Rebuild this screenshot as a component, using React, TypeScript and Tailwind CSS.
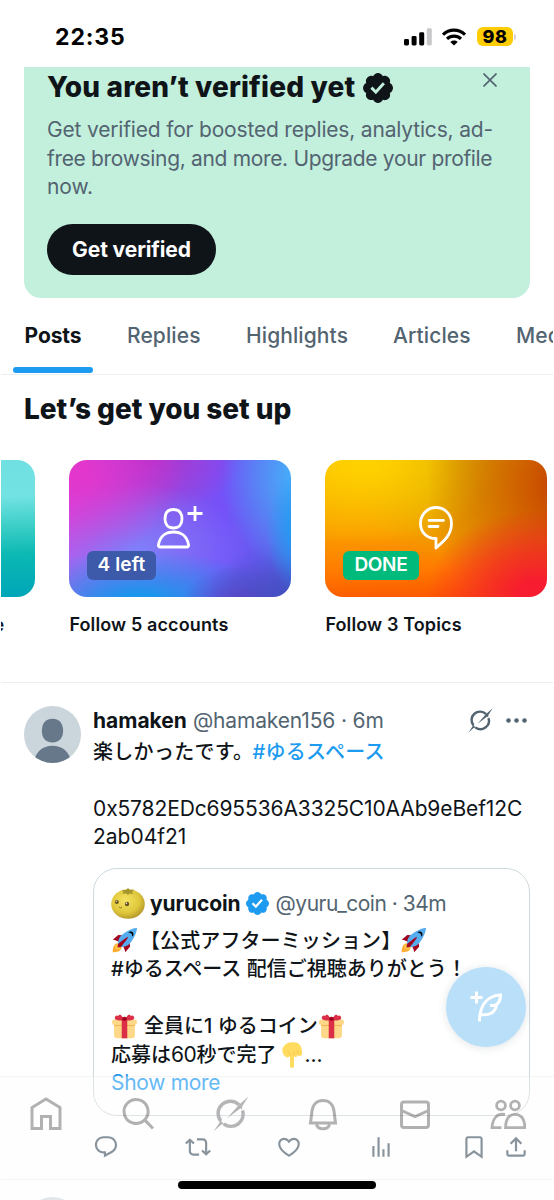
import React from "react";

type IconProps = { d: string; className?: string; viewBox?: string };

const Icon = ({ d, className = "", viewBox = "0 0 24 24" }: IconProps) => (
  <svg viewBox={viewBox} className={`shrink-0 ${className}`} fill="currentColor" aria-hidden="true">
    <path d={d} />
  </svg>
);

const PATHS = {
  verified:
    "M20.396 11c-.018-.646-.215-1.275-.57-1.816-.354-.54-.852-.972-1.438-1.246.223-.607.27-1.264.14-1.897-.131-.634-.437-1.218-.882-1.687-.47-.445-1.053-.75-1.687-.882-.633-.13-1.29-.083-1.897.14-.273-.587-.704-1.086-1.245-1.44S11.647 1.62 11 1.604c-.646.017-1.273.213-1.813.568s-.969.854-1.24 1.44c-.608-.223-1.267-.272-1.902-.14-.635.13-1.22.436-1.69.882-.445.47-.749 1.055-.878 1.688-.13.633-.08 1.29.144 1.896-.587.274-1.087.705-1.443 1.245-.356.54-.555 1.17-.574 1.817.02.647.218 1.276.574 1.817.356.54.856.972 1.443 1.245-.224.606-.274 1.263-.144 1.896.13.634.433 1.218.877 1.688.47.443 1.054.747 1.687.878.633.132 1.29.084 1.897-.136.274.586.705 1.084 1.246 1.439.54.354 1.17.551 1.816.569.647-.016 1.276-.213 1.817-.567s.972-.854 1.245-1.44c.604.239 1.266.296 1.903.164.636-.132 1.22-.447 1.68-.907.46-.46.776-1.044.908-1.681s.075-1.299-.165-1.903c.586-.274 1.084-.705 1.439-1.246.354-.54.551-1.17.569-1.816zM9.662 14.85l-3.429-3.428 1.293-1.302 2.072 2.072 4.4-4.794 1.347 1.246z",
  reply:
    "M1.751 10c0-4.42 3.584-8 8.005-8h4.366c4.49 0 8.129 3.64 8.129 8.13 0 2.96-1.607 5.68-4.196 7.11l-8.054 4.46v-3.69h-.067c-4.49.1-8.183-3.51-8.183-8.01zm8.005-6c-3.317 0-6.005 2.69-6.005 6 0 3.37 2.77 6.08 6.138 6.01l.351-.01h1.761v2.3l5.087-2.81c1.951-1.08 3.163-3.13 3.163-5.36 0-3.39-2.744-6.13-6.129-6.13H9.756z",
  repost:
    "M4.5 3.88l4.432 4.14-1.364 1.46L5.5 7.55V16c0 1.1.896 2 2 2H13v2H7.5c-2.209 0-4-1.79-4-4V7.55L1.432 9.48.068 8.02 4.5 3.88zM16.5 6H11V4h5.5c2.209 0 4 1.79 4 4v8.45l2.068-1.93 1.364 1.46-4.432 4.14-4.432-4.14 1.364-1.46 2.068 1.93V8c0-1.1-.896-2-2-2z",
  like: "M16.697 5.5c-1.222-.06-2.679.51-3.89 2.16l-.805 1.09-.806-1.09C9.984 6.01 8.526 5.44 7.304 5.5c-1.243.07-2.349.78-2.91 1.91-.552 1.12-.633 2.78.479 4.82 1.074 1.97 3.257 4.27 7.129 6.61 3.87-2.34 6.052-4.64 7.126-6.61 1.111-2.04 1.03-3.7.477-4.82-.561-1.13-1.666-1.84-2.908-1.91zm4.187 7.69c-1.351 2.48-4.001 5.12-8.379 7.67l-.503.3-.504-.3c-4.379-2.55-7.029-5.19-8.382-7.67-1.36-2.5-1.41-4.86-.514-6.67.887-1.79 2.647-2.91 4.601-3.01 1.651-.09 3.368.56 4.798 2.01 1.429-1.45 3.146-2.1 4.796-2.01 1.954.1 3.714 1.22 4.601 3.01.896 1.81.846 4.17-.514 6.67z",
  views: "M8.75 21V3h2v18h-2zM18 21V8.5h2V21h-2zM4 21l.004-10h2L6 21H4zm9.248 0v-7h2v7h-2z",
  bookmark:
    "M4 4.5C4 3.12 5.119 2 6.5 2h11C18.881 2 20 3.12 20 4.5v18.44l-8-5.71-8 5.71V4.5zM6.5 4c-.276 0-.5.22-.5.5v14.56l6-4.29 6 4.29V4.5c0-.28-.224-.5-.5-.5h-11z",
  share:
    "M12 2.59l5.7 5.7-1.41 1.42L13 6.41V16h-2V6.41l-3.3 3.3-1.41-1.42L12 2.59zM21 15l-.02 3.51c0 1.38-1.12 2.49-2.5 2.49H5.5C4.11 21 3 19.88 3 18.5V15h2v3.5c0 .28.22.5.5.5h12.98c.28 0 .5-.22.5-.5L19 15h2z",
};

const Grok = ({ className = "" }: { className?: string }) => (
  <svg viewBox="0 0 36 36" className={`shrink-0 ${className}`} fill="none" aria-hidden="true">
    <path d="M26 8.800A12.200 12.200 0 0 0 7.800 25" stroke="currentColor" strokeWidth="3.500" />
    <path d="M10.800 28A12.200 12.200 0 0 0 29.600 14.500" stroke="currentColor" strokeWidth="3.500" />
    <path d="M13.800 22.600L26 8.800L35.500 .5L30 9C28.900 10.900 28.800 12 29.400 14L27.600 12.200Z" fill="currentColor" />
    <path d="M.5 35.500L6 27.500C7.100 25.800 7.100 24.600 6.500 22.800L9.200 26.200L12.500 28.900C9.800 28 8.700 28.300 7.500 29.300Z" fill="currentColor" />
  </svg>
);

const Rocket = ({ className = "" }: { className?: string }) => (
  <svg viewBox="0 0 36 36" className={`shrink-0 ${className}`} aria-hidden="true">
    <path fill="#A0041E" d="M1 17l8-7 16 1 1 16-7 8s.001-5.999-6-12-12-6-12-6z" />
    <path fill="#FFAC33" d="M.973 35s-.036-7.979 2.985-11S15 21.187 15 21.187 14.999 29 11.999 32c-3 3-11.026 3-11.026 3z" />
    <circle fill="#FFCC4D" cx="9" cy="27" r="4" />
    <path fill="#55ACEE" d="M35.999 0s-10 0-22 10c-6 5-6 14-4 16s11 2 16-4c10-12 10-22 10-22z" />
    <path d="M26.999 5c-1.623 0-3.013.971-3.641 2.36.502-.227 1.055-.36 1.641-.36 2.209 0 4 1.791 4 4 0 .586-.133 1.139-.359 1.64 1.389-.627 2.359-2.017 2.359-3.64 0-2.209-1.791-4-4-4z" />
    <path fill="#A0041E" d="M8 28s0-4 1-5 13.001-10.999 14-10-9.001 13-10.001 14S8 28 8 28z" />
  </svg>
);

const Gift = ({ className = "" }: { className?: string }) => (
  <svg viewBox="0 0 36 36" className={`shrink-0 ${className}`} aria-hidden="true">
    <path fill="#FDD888" d="M33 31c0 2.200-1.800 4-4 4H7c-2.200 0-4-1.800-4-4V14h30z" />
    <path fill="#FCAB40" d="M3 15h30v2H3z" />
    <rect fill="#FDD888" y="8" width="36" height="8" rx="3.500" />
    <path fill="#DA2F47" d="M14 8h8v27h-8z" />
    <path fill="#DA2F47" d="M18 9C13 10 4 9 4 6c0-4 3-5 5-3 1-3 4-2 5 0s3 3 4 4c1-1 3-2 4-4s4-3 5 0c2-2 5-1 5 3 0 3-9 4-14 3z" />
    <ellipse fill="#A0041E" cx="18" cy="7" rx="3.500" ry="3" />
  </svg>
);

const PointDown = ({ className = "" }: { className?: string }) => (
  <svg viewBox="0 0 36 36" className={`shrink-0 ${className}`} aria-hidden="true">
    <path
      fill="#FFDC5D"
      d="M10 2.500C13-.5 24-.5 27 2c3.500 2.500 5 8 5 14 0 4-5 4.500-6 1.500-.3 4-4.600 4-5.200 1.500V33c0 4-5.600 4-5.600 0V19c-1 2.500-5 3-6.500 1C6 18 4.500 14 4.500 11c0-3 2.500-5.500 5.500-8.500z"
    />
    <path fill="none" stroke="#EF9645" strokeOpacity=".55" strokeWidth="1" strokeLinecap="round" d="M26 12v4.500M20.800 13v5M15 18.500c0-3-1-4-2.500-5" />
  </svg>
);

const StatusBar = () => (
  <header className="flex h-[67px] shrink-0 items-center justify-between pt-[6px] pr-[37px] pl-[54px]">
    <span className="text-[23px] font-bold leading-7 tracking-[0.9px] text-black">22:35</span>
    <div className="flex items-center">
      <svg viewBox="0 0 28 18" className="h-[18px] w-[28px]" aria-hidden="true">
        <rect x="0" y="11" width="5" height="6.500" rx="1.400" />
        <rect x="7.600" y="8" width="5" height="9.500" rx="1.400" />
        <rect x="15.200" y="4.300" width="5" height="13.200" rx="1.400" />
        <rect x="22.800" y="0.300" width="5" height="17.200" rx="1.400" fill="#c8c8cb" />
      </svg>
      <svg viewBox="0 0 24 18" className="ml-[10px] h-[18px] w-[24px]" fill="none" stroke="#000" strokeWidth="3.100" aria-hidden="true">
        <path d="M1 6.700C7 .6 17 .6 23 6.700" />
        <path d="M5 10.900C9 7.200 15 7.200 19 10.900" />
        <path d="M12 17.600L8.300 13.900C10.500 12 13.500 12 15.700 13.900Z" fill="#000" stroke="none" />
      </svg>
      <span className="ml-[11px] flex h-[19px] w-[36px] items-center justify-center rounded-[6px] bg-[#fdcc02] text-[18px] font-extrabold tracking-[0.6px] text-black">98</span>
      <span className="ml-px h-[6px] w-[2px] rounded-r-full bg-[#dccfe0]" />
    </div>
  </header>
);

const VerifyBanner = () => (
  <section className="mx-[23px] h-[231px] shrink-0 rounded-b-[17px] bg-[#c3efdd] px-[23px] pt-[4px]">
    <div className="flex h-[33px] items-center">
      <h2 className="text-[28px] font-extrabold leading-[33px] tracking-[0.16px] whitespace-nowrap">You aren’t verified yet</h2>
      <Icon d={PATHS.verified} viewBox="1.600 1.600 18.800 18.800" className="ml-[8px] h-[30px] w-[30px]" />
      <svg viewBox="0 0 14 14" className="mr-[10px] mb-[15px] ml-auto h-[14px] w-[14px]" stroke="#536471" strokeWidth="1.600" aria-label="Close">
        <path d="M.5 .5L13.500 13.500M13.500 .5L.5 13.500" />
      </svg>
    </div>
    <p className="mt-[12px] text-[21px] leading-[28.5px] whitespace-nowrap text-[#536471]">
      <span className="block tracking-[-0.18px]">Get verified for boosted replies, analytics, ad-</span>
      <span className="block tracking-[-0.33px]">free browsing, and more. Upgrade your profile</span>
      <span className="block tracking-[-0.1px]">now.</span>
    </p>
    <button className="mt-[22.5px] flex h-[51px] w-[169px] items-center justify-center rounded-full bg-[#0f1419] text-[21px] font-bold tracking-[-0.1px] whitespace-nowrap text-white">
      Get verified
    </button>
  </section>
);

const Tabs = () => (
  <nav className="flex h-[77px] w-[800px] shrink-0 border-b border-[#eceff1] pl-[12px] text-[21px] font-medium tracking-[0.1px] text-[#536471]">
    <div className="flex h-[75px] w-[80px] flex-col items-center justify-between pt-[24px] font-bold text-[#0f1419]">
      <span className="leading-7 tracking-[-0.1px]">Posts</span>
      <span className="h-[6px] w-full rounded-full bg-[#1d9bf0]" />
    </div>
    <span className="ml-[34px] w-[75px] pt-[24px] leading-7">Replies</span>
    <span className="ml-[44px] w-[103px] pt-[24px] leading-7">Highlights</span>
    <span className="ml-[44px] w-[77px] pt-[24px] leading-7">Articles</span>
    <span className="ml-[46px] pt-[24px] leading-7">Media</span>
  </nav>
);

const SetupCard = ({ art, label, badge, badgeClass = "", icon }: { art: string; label: string; badge?: string; badgeClass?: string; icon?: React.ReactNode }) => (
  <article className="w-[222px] shrink-0">
    <div className={`relative flex h-[137px] items-center justify-center overflow-hidden rounded-[18px] ${art}`}>
      {icon}
      {badge && (
        <span className={`absolute bottom-[17px] left-[17.5px] flex h-[29px] items-center justify-center rounded-[6px] text-[19px] font-semibold text-white ${badgeClass}`}>{badge}</span>
      )}
    </div>
    <p className="mt-[15px] text-[18px] font-semibold leading-[26px] whitespace-nowrap">{label}</p>
  </article>
);

const Setup = () => (
  <section className="h-[308px] shrink-0 border-b border-[#eceff1] pt-[16px]">
    <h2 className="pl-[23px] text-[28px] font-extrabold leading-9 tracking-[-0.05px]">Let’s get you set up</h2>
    <div className="-ml-[187.6px] mt-[33px] flex gap-[34px] tracking-[0.12px]">
      <SetupCard art="bg-[linear-gradient(178deg,#6fdfe1_0%,#72e2e3_30%,#3dcfc8_50%,#0cb9b3_70%,#00a5b8_100%)]" label="Complete your profile" />
      <SetupCard
        art="bg-[radial-gradient(ellipse_14%_45%_at_103%_52%,#1b9df0_0%,transparent_100%),radial-gradient(ellipse_38%_72%_at_106%_12%,#4aa8f8_20%,transparent_100%),radial-gradient(ellipse_45%_45%_at_106%_102%,#3b50bd_0%,transparent_100%),radial-gradient(ellipse_30%_30%_at_80%_106%,#6a38c0_0%,transparent_100%),radial-gradient(ellipse_65%_38%_at_32%_104%,#1a96ec_15%,transparent_100%),radial-gradient(ellipse_50%_66%_at_2%_8%,#e236cc_10%,transparent_100%),radial-gradient(ellipse_52%_48%_at_30%_66%,#7f80fb_0%,transparent_100%),radial-gradient(ellipse_42%_40%_at_35%_0%,#b030cc_0%,transparent_100%),linear-gradient(96deg,#d050e8_0%,#8a52e8_40%,#7450f8_68%,#5a62e8_100%)]"
        label="Follow 5 accounts"
        badge="4 left"
        badgeClass="w-[69px] bg-[#3d59a9] tracking-[0.1px]"
        icon={
          <svg viewBox="0 0 46 44" className="mt-[-3px] h-[44px] w-[46px]" fill="none" stroke="#fff" strokeWidth="2.800" strokeLinejoin="round" aria-hidden="true">
            <path d="M16.500 4.500c6.200 0 8.500 4 8.500 9.500s-3 9-8.500 9-8.500-3.500-8.500-9 2.300-9.500 8.500-9.500z" />
            <path d="M1.500 39.500C3 31 9 27 16.500 27s13.500 4 15 12.500c.2 1.700-.3 2.500-1.800 2.500H3.300c-1.500 0-2-.8-1.800-2.500z" />
            <path d="M38 1v15M30.500 8.500h15" />
          </svg>
        }
      />
      <SetupCard
        art="bg-[radial-gradient(ellipse_50%_62%_at_96%_98%,#f71c30_15%,transparent_100%),radial-gradient(ellipse_62%_115%_at_108%_18%,#c64600_8%,transparent_100%),radial-gradient(ellipse_60%_62%_at_18%_0%,#ffd000_12%,transparent_100%),radial-gradient(ellipse_50%_80%_at_62%_0%,#d4a800_0%,transparent_100%),linear-gradient(178deg,#f4b400_0%,#fa9d00_50%,#ff7a00_78%,#fb5400_100%)]"
        label="Follow 3 Topics"
        badge="DONE"
        badgeClass="w-[76px] bg-[#00ba7c] tracking-[-0.3px]"
        icon={
          <svg viewBox="0 0 34 44" className="mt-[-1px] h-[44px] w-[34px]" fill="none" stroke="#fff" strokeWidth="2.800" strokeLinejoin="round" strokeLinecap="round" aria-hidden="true">
            <path d="M17 42v-9.500C7.500 32.500 1.500 26 1.500 17.500S8 1.500 17 1.500s15.500 7 15.500 16C32.500 29 25 35 17 42z" />
            <path d="M10 14.300h14.500M10 20.500h9" />
          </svg>
        }
      />
    </div>
  </section>
);

const DefaultAvatar = () => (
  <svg viewBox="0 0 57 57" className="h-[57px] w-[57px] shrink-0" aria-hidden="true">
    <clipPath id="face"><circle cx="28.500" cy="28.500" r="28.500" /></clipPath>
    <g clipPath="url(#face)">
      <rect width="57" height="57" fill="#cbd5dc" />
      <path fill="#66788a" d="M28.500 12.800c7.500 0 10.600 5.500 10.600 12.200S35.500 36.400 28.500 36.400 17.900 32 17.900 25s3.100-12.200 10.600-12.200z" />
      <path fill="#66788a" d="M10 57c1-11 8.500-17.200 18.500-17.200S46 46 47 57z" />
    </g>
  </svg>
);

const CoinAvatar = () => (
  <svg viewBox="0 0 34 34" className="h-[34px] w-[34px] shrink-0" aria-hidden="true">
    <defs>
      <radialGradient id="yuzu" cx="42%" cy="38%" r="65%">
        <stop offset="0" stopColor="#f5e362" />
        <stop offset=".65" stopColor="#dfc73b" />
        <stop offset="1" stopColor="#b3962a" />
      </radialGradient>
    </defs>
    <ellipse cx="17" cy="17" rx="16.800" ry="14.800" fill="url(#yuzu)" />
    <path fill="#a5952e" d="M11 3l4 0 2-2 2 2 4-.5-2 2.500 1.500 2-4-.6-1.500 1.600-2-1.800-3.500.8 1-2z" />
    <circle cx="5.800" cy="15" r="2" fill="#6b5520" />
    <circle cx="16" cy="17" r="2.200" fill="#6b5520" />
    <circle cx="5.300" cy="14.300" r=".6" fill="#fff" />
    <circle cx="15.400" cy="16.300" r=".7" fill="#fff" />
    <path d="M8 20q1.500 1.600 3 .4" stroke="#8a6a25" strokeWidth=".9" fill="none" />
  </svg>
);

const QuotedPost = () => (
  <article className="mt-[16px] h-[248px] w-[437px] rounded-[24px] border-[1.5px] border-[#cfd9de] pt-[17px] pl-[17px]">
    <div className="flex h-[36px] items-center text-[21px] whitespace-nowrap">
      <CoinAvatar />
      <b className="ml-[5px] font-bold tracking-[-0.1px]">yurucoin</b>
      <Icon d={PATHS.verified} viewBox="1.600 1.600 18.800 18.800" className="ml-[5px] h-[23px] w-[23px] text-[#1d9bf0]" />
      <span className="ml-[7px] tracking-[-0.5px] text-[#536471]">@yuru_coin · 34m</span>
    </div>
    <div className="mt-[5px] text-[20px] font-medium leading-[28.5px] whitespace-nowrap">
      <p className="flex h-[28.5px] items-center">
        <Rocket className="ml-[1px] h-[25px] w-[25px]" />
        <span className="ml-[3px] tracking-[0.1px]">【公式アフターミッション】</span>
        <Rocket className="h-[25px] w-[25px]" />
      </p>
      <p className="h-[28.5px]">#ゆるスペース 配信ご視聴ありがとう！</p>
      <p className="h-[28.5px]" />
      <p className="flex h-[28.5px] items-center">
        <Gift className="ml-[1px] h-[25px] w-[25px]" />
        <span className="ml-[7px]">全員に1 ゆるコイン</span>
        <Gift className="ml-[1px] h-[25px] w-[25px]" />
      </p>
      <p className="flex h-[28.5px] items-center">
        応募は<span className="text-[21px] font-normal tracking-[-0.4px]">60</span>秒で完了
        <PointDown className="ml-[3px] h-[26px] w-[26px]" />
        <span className="-ml-px">...</span>
      </p>
      <p className="h-[28.5px] text-[21px] font-normal tracking-[-0.3px] text-[#1d9bf0]">Show more</p>
    </div>
  </article>
);

const Post = () => (
  <article className="flex h-[497px] shrink-0 border-b border-[#eceff1] pt-[23px] pl-[23px]">
    <DefaultAvatar />
    <div className="ml-[12px] w-[437px] text-[21px]">
      <div className="flex h-[28.5px] items-center whitespace-nowrap text-[#536471]">
        <b className="font-bold text-[#0f1419]">hamaken</b>
        <span className="ml-[6px] tracking-[-0.15px]">@hamaken156 · 6m</span>
        <Grok className="ml-auto h-[25px] w-[25px]" />
        <svg viewBox="0 0 21 5" className="mr-[3px] ml-[13px] h-[5px] w-[21px]" fill="currentColor" aria-hidden="true">
          <circle cx="2.500" cy="2.500" r="2.300" /><circle cx="10.500" cy="2.500" r="2.300" /><circle cx="18.500" cy="2.500" r="2.300" />
        </svg>
      </div>
      <div className="mt-[3px] leading-[28.5px] whitespace-nowrap">
        <p className="h-[28.5px] text-[20px] font-medium tracking-[0.3px]">
          楽しかったです。<span className="-ml-px text-[#1d9bf0]">#ゆるスペース</span>
        </p>
        <p className="h-[28.5px]" />
        <p className="h-[28.5px] tracking-[-0.12px]">0x5782EDc695536A3325C10AAb9eBef12C</p>
        <p className="h-[28.5px]">2ab04f21</p>
      </div>
      <QuotedPost />
      <div className="mt-[18px] flex items-center text-[#536471]">
        <Icon d={PATHS.reply} className="h-[26px] w-[26px]" />
        <Icon d={PATHS.repost} className="ml-[66px] h-[26px] w-[26px]" />
        <Icon d={PATHS.like} className="ml-[65px] h-[26px] w-[26px]" />
        <Icon d={PATHS.views} className="ml-[66px] h-[26px] w-[26px]" />
        <Icon d={PATHS.bookmark} className="ml-[67px] h-[26px] w-[26px]" />
        <Icon d={PATHS.share} className="ml-[16px] h-[26px] w-[26px]" />
      </div>
    </div>
  </article>
);

const BottomNav = () => (
  <nav className="absolute inset-x-0 bottom-0 h-[124px] border-t border-[#0000000a] bg-[#fdfdfd50]">
    <div className="relative -mt-px h-[124px]">
      <div className="flex h-[76px] items-center justify-around text-black/30">
        <svg viewBox="0 0 36 36" className="h-[36px] w-[36px]" fill="none" stroke="currentColor" strokeWidth="3" aria-hidden="true">
          <path d="M4 32.500V11.500L18 3l14 8.500v21H22.500V20.500h-9v12z" />
        </svg>
        <svg viewBox="0 0 36 36" className="h-[36px] w-[36px]" fill="none" stroke="currentColor" strokeWidth="3" aria-hidden="true">
          <path d="M24.500 24A12 12 0 1 1 24.600 23.900L33 32.500" />
        </svg>
        <Grok className="h-[36px] w-[36px] text-[#b4b5b6]" />
        <svg viewBox="0 0 36 36" className="h-[36px] w-[36px]" fill="none" stroke="currentColor" strokeWidth="3" aria-hidden="true">
          <path d="M5.500 27L7 15c.8-6.500 5-10.500 11-10.500S28.200 8.500 29 15l1.500 12z" />
          <path d="M11.500 28.500c.8 3 3.200 4.300 6.500 4.300s5.700-1.300 6.500-4.300" />
        </svg>
        <svg viewBox="0 0 36 36" className="h-[36px] w-[36px]" fill="none" stroke="currentColor" strokeWidth="3" aria-hidden="true">
          <path d="M5 14.200V8C5 6.600 5.900 5.500 7.500 5.500h22c1.600 0 2.500 1.100 2.500 2.500v20.500c0 1.600-.9 2.500-2.500 2.500h-22C5.900 31 5 30.100 5 28.500V14l13.500 6L32 14" transform="translate(-.5 .5)" />
        </svg>
        <svg viewBox="0 0 36 36" className="h-[36px] w-[36px]" fill="none" stroke="currentColor" strokeWidth="2.800" aria-hidden="true">
          <circle cx="11" cy="9.500" r="4.400" /><circle cx="25" cy="9.500" r="4.400" />
          <path d="M15 18.500c-8-1.500-12.500 4-13 13.200h9.500" />
          <path d="M15.500 31.700c.3-8.500 3.500-13.400 9.700-13.400s9.400 4.900 9.800 13.400z" />
        </svg>
      </div>
      <div className="mx-auto mt-[29px] h-[8px] w-[198px] rounded-full bg-black" />
    </div>
  </nav>
);

const ComposeButton = () => (
  <button aria-label="Compose" className="absolute right-[28px] bottom-[153px] flex h-[80px] w-[80px] items-center justify-center rounded-full bg-[#b9dff9] text-white shadow-[0_1px_8px_rgba(60,80,100,0.16)]">
    <svg viewBox="0 0 32 32" className="h-[32px] w-[32px]" fill="none" stroke="currentColor" strokeWidth="3" aria-hidden="true">
      <path d="M6.500 .5v12M.5 6.500h12" />
      <path d="M9.500 30.500C9.500 17 15 5 30.500 4c0 6-2.500 9.500-6.500 10.500h-4M26.500 14c-1 7-7 11-15.500 9.500" />
    </svg>
  </button>
);

export default function App() {
  return (
    <div className="relative h-[1200px] w-[554px] overflow-hidden bg-white px-px font-['Inter','Noto_Sans_CJK_JP',sans-serif] text-[#0f1419]">
      <main className="flex h-[1200px] w-[552px] flex-col overflow-hidden">
        <StatusBar />
        <VerifyBanner />
        <Tabs />
        <Setup />
        <Post />
        <div className="flex h-[90px] shrink-0 pt-[17px] pl-[23px] opacity-80">
          <DefaultAvatar />
        </div>
      </main>
      <ComposeButton />
      <BottomNav />
    </div>
  );
}
